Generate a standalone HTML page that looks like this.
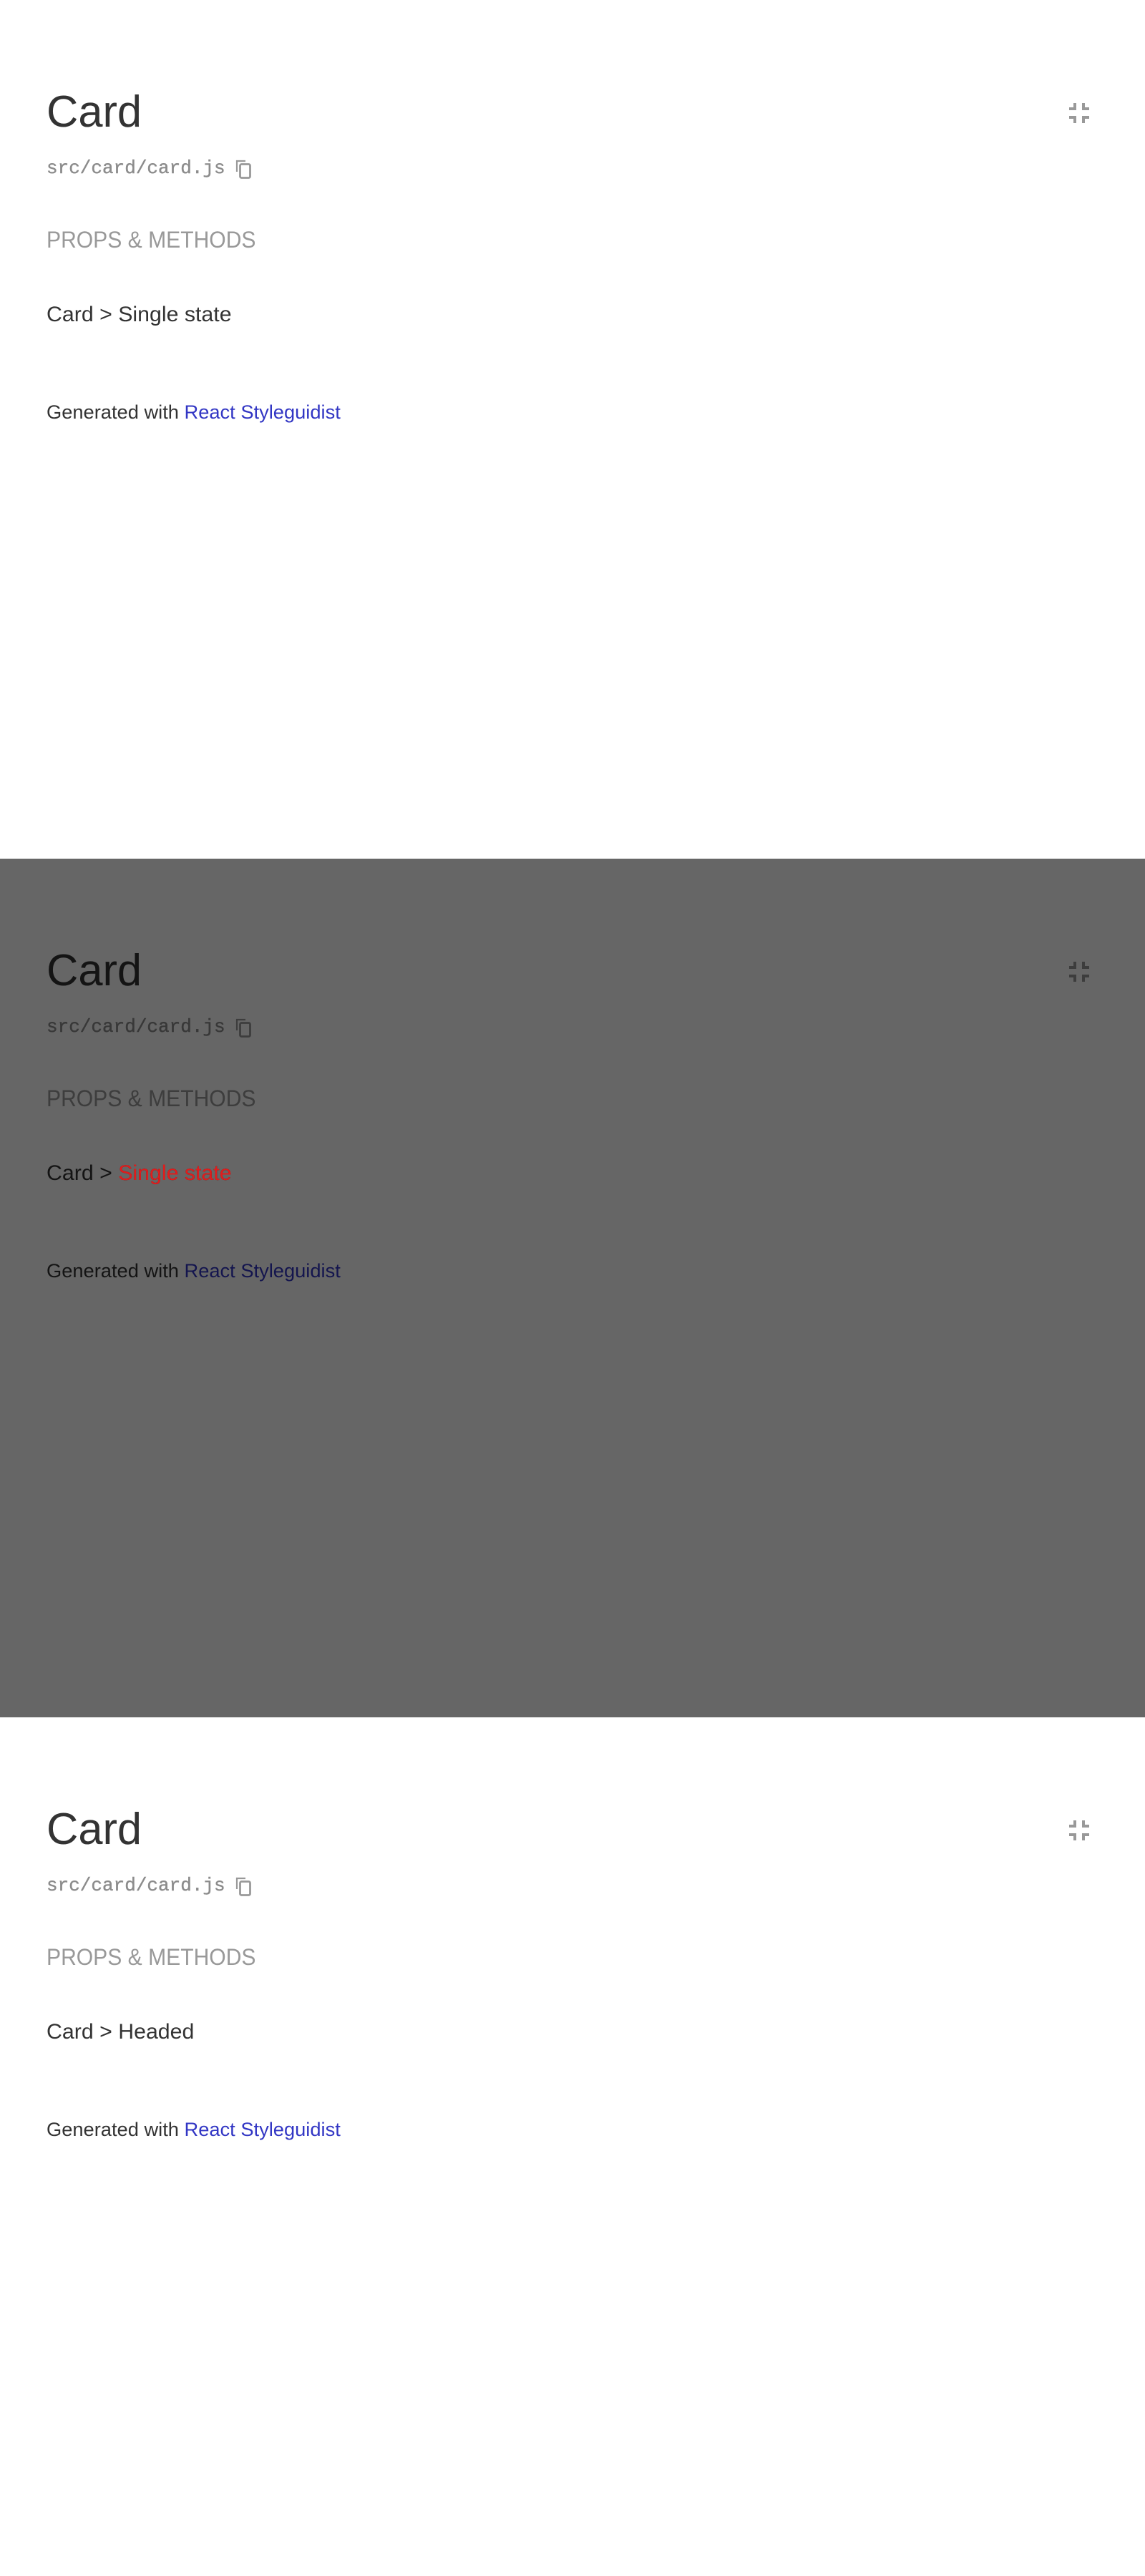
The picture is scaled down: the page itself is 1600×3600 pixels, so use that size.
<!DOCTYPE html>
<html><head><meta charset="utf-8"><style>
*{margin:0;padding:0;box-sizing:border-box}
body{width:1600px;height:3600px;background:#fff;position:relative;overflow:hidden;font-family:"Liberation Sans",sans-serif}
.sec{position:absolute;left:0;width:1600px;height:1200px;background:#fff}
.t{position:absolute;left:65px;line-height:1;white-space:nowrap;transform-origin:0 0}
.title{top:126px;font-size:62px;color:#333;transform:scaleX(0.99)}
.path{top:222px;font-size:26px;color:#8c8c8c;font-family:"Liberation Mono",monospace;-webkit-text-stroke:0.4px #8c8c8c}
.props{top:319px;font-size:32px;color:#999;transform:scaleX(0.94)}
.crumb{top:425px;font-size:30px;color:#333;transform:scaleX(1.01)}
.foot{top:563px;font-size:27px;color:#333;transform:scaleX(1.01)}
.foot span{color:#3236c4}
.copy{position:absolute;left:329px;top:223px}
.cmp{position:absolute;left:1494px;top:144px}
.ov{position:absolute;left:0;top:0;width:1600px;height:1200px;background:rgba(0,0,0,0.6)}
.red{color:transparent}
.red b{font-weight:normal;color:#e21c1c}
</style></head><body>

<div class="sec" style="top:0">
<div class="t title">Card</div>
<div class="t path">src/card/card.js</div>
<svg class="copy" width="23" height="27" viewBox="0 0 23 27"><path d="M2 17V2h12" fill="none" stroke="#999" stroke-width="2.2"/><rect x="6.5" y="6.5" width="14" height="19" rx="2" fill="none" stroke="#999" stroke-width="2.8"/></svg>
<svg class="cmp" width="28" height="28" viewBox="0 0 28 28" fill="#999"><path d="M6 0h4v10H0V6h6zM18 0h4v6h6v4H18zM0 18h10v10H6v-6H0zM18 18h10v4h-6v6h-4z"/></svg>
<div class="t props">PROPS &amp; METHODS</div>
<div class="t crumb">Card &gt; Single state</div>
<div class="t foot">Generated with <span>React Styleguidist</span></div>
</div>

<div class="sec" style="top:1200px">
<div class="t title">Card</div>
<div class="t path">src/card/card.js</div>
<svg class="copy" width="23" height="27" viewBox="0 0 23 27"><path d="M2 17V2h12" fill="none" stroke="#999" stroke-width="2.2"/><rect x="6.5" y="6.5" width="14" height="19" rx="2" fill="none" stroke="#999" stroke-width="2.8"/></svg>
<svg class="cmp" width="28" height="28" viewBox="0 0 28 28" fill="#999"><path d="M6 0h4v10H0V6h6zM18 0h4v6h6v4H18zM0 18h10v10H6v-6H0zM18 18h10v4h-6v6h-4z"/></svg>
<div class="t props">PROPS &amp; METHODS</div>
<div class="t crumb">Card &gt; Single state</div>
<div class="t foot">Generated with <span>React Styleguidist</span></div>
<div class="ov"></div>
<div class="t crumb red">Card &gt; <b>Single state</b></div>
</div>

<div class="sec" style="top:2400px">
<div class="t title">Card</div>
<div class="t path">src/card/card.js</div>
<svg class="copy" width="23" height="27" viewBox="0 0 23 27"><path d="M2 17V2h12" fill="none" stroke="#999" stroke-width="2.2"/><rect x="6.5" y="6.5" width="14" height="19" rx="2" fill="none" stroke="#999" stroke-width="2.8"/></svg>
<svg class="cmp" width="28" height="28" viewBox="0 0 28 28" fill="#999"><path d="M6 0h4v10H0V6h6zM18 0h4v6h6v4H18zM0 18h10v10H6v-6H0zM18 18h10v4h-6v6h-4z"/></svg>
<div class="t props">PROPS &amp; METHODS</div>
<div class="t crumb">Card &gt; Headed</div>
<div class="t foot">Generated with <span>React Styleguidist</span></div>
</div>

</body></html>
